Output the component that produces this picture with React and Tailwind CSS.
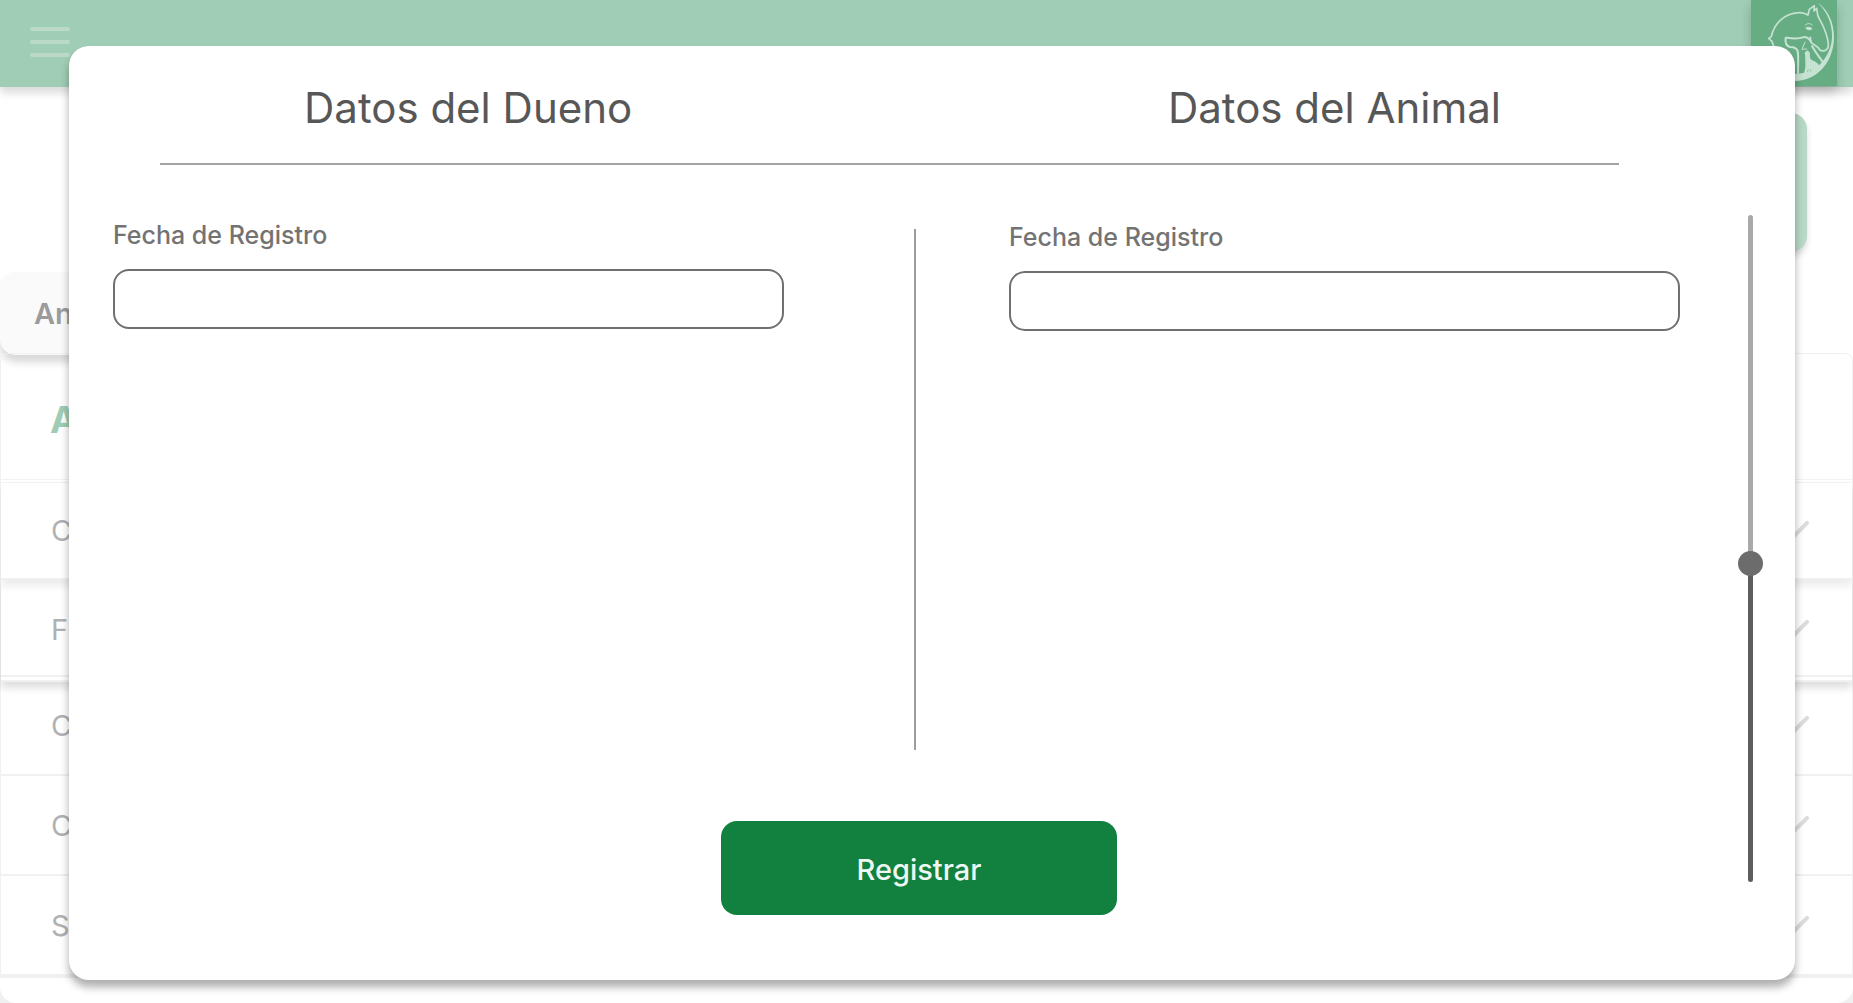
import { useState } from 'react';

const rows = [
  { id: 'r1', text: 'C', className: 'h-[97px] border-b-2 shadow-[0_6px_8px_rgba(0,0,0,0.08)]' },
  { id: 'r2', text: 'F', className: 'h-[102px] border-b-7 border-double pt-1 shadow-[0_6px_8px_rgba(0,0,0,0.13)]' },
  { id: 'r3', text: 'C', className: 'h-[94px] border-b-2 pb-1' },
  { id: 'r4', text: 'C', className: 'h-[100px] border-b-2 pt-0.5' },
  { id: 'r5', text: 'S', className: 'h-[101px] border-b-3 pt-0.5' },
];

function Logo() {
  return (
    <svg viewBox="153 0 258 258" className="block size-[86px]" fill="none" stroke="#c6e2d2" strokeLinejoin="round" strokeLinecap="round" aria-hidden="true">
      <path d="M352 7C386 30 402 70 402 112C402 185 352 243 285 243C262 243 240 232 226 214C250 226 268 222 284 222L318 220C362 204 394 160 396 112C397 74 384 38 352 7Z" fill="#c6e2d2" stroke="none" />
      <path d="M222 142L216 124L206 115L214 110C222 72 252 40 296 38C308 37 316 40 324 45L328 28L343 17L342 33L350 25L353 45C356 56 368 72 375 92C381 108 387 128 384 142C380 154 366 156 358 148C352 138 340 134 333 127C330 122 333 116 331 112" strokeWidth="5" />
      <path d="M333 124C324 112 318 109 308 112C294 118 274 115 257 113C255 126 258 138 270 141C284 141 291 145 293 154C296 174 294 196 294 222" strokeWidth="6" />
      <path d="M336 138C346 156 358 172 370 188" strokeWidth="6" />
      <path d="M315 76C321 69 331 69 337 75" strokeWidth="3" />
      <path d="M316 83C322 78 333 79 337 86C331 93 321 92 316 83Z" fill="#c6e2d2" stroke="none" />
      <path d="M315 126L306 148L320 147" strokeWidth="3" />
      <path d="M314 158L322 151L329 157C331 168 328 174 334 179C346 184 356 190 362 204L340 226L300 234L296 222L312 218C320 200 314 180 316 168Z" fill="#c6e2d2" stroke="none" />
      <path d="M322 214L325 209M331 214L333 209" stroke="#67ad83" strokeWidth="2" />
    </svg>
  );
}

function Chevron() {
  return (
    <svg viewBox="0 0 34 20" className="h-5 w-[34px]" fill="none" stroke="#dcdcdc" strokeWidth="4" strokeLinecap="round" strokeLinejoin="round" aria-hidden="true">
      <path d="M2 2L17 17L32 2" />
    </svg>
  );
}

function Field({ id, label, className }) {
  return (
    <div className={className}>
      <label htmlFor={id} className="block text-[25px] leading-8 font-medium text-[#737373]">
        {label}
      </label>
      <input id={id} type="text" className="mt-[18px] block h-[60px] w-full rounded-2xl border-2 border-[#707070] bg-white px-4 text-[25px] text-[#555] outline-none" />
    </div>
  );
}

function Background() {
  return (
    <div className="flex min-h-screen flex-col bg-[#f0f0f0]">
      <div className="flex flex-1 flex-col rounded-b-2xl bg-white">
        <header className="flex h-[87px] items-start justify-between bg-[#a0cdb5] pr-4 pl-[30px] shadow-[0_6px_8px_rgba(0,0,0,0.14)]">
          <button type="button" aria-label="Menu" className="mt-[27px] flex w-10 flex-col gap-[9px]">
            <span className="h-1 w-full rounded-full bg-[#bad9c9]" />
            <span className="h-1 w-full rounded-full bg-[#bad9c9]" />
            <span className="h-1 w-full rounded-full bg-[#bad9c9]" />
          </button>
          <div className="bg-[#67ad83] shadow-[0_6px_10px_rgba(0,0,0,0.2)]">
            <Logo />
          </div>
        </header>
        <div className="mt-[26px] flex justify-end pr-[46px]">
          <div className="h-[139px] w-60 rounded-2xl bg-[#b8d9c7] shadow-[0_5px_6px_rgba(0,0,0,0.14)]" />
        </div>
        <div className="mt-5 flex h-[83px] w-60 items-center rounded-2xl bg-[#fafafa] pl-[34px] text-[29px] leading-10 font-semibold text-[#9b9b9b] shadow-[0_7px_8px_rgba(0,0,0,0.16)]">
          An
        </div>
        <section className="-mt-0.5 rounded-t-lg border border-[#f1f1f2]">
          <h2 className="flex h-[125px] items-center pt-1.5 pl-[49px] text-[37px] leading-12 font-bold text-[#9fccb4]">A</h2>
          <ul className="border-t-4 border-double border-[#f1f2f4]">
            {rows.map((row) => (
              <li key={row.id} className={`flex items-center justify-between border-[#f0f1f3] pr-[43px] pl-[50px] text-[29px] leading-10 text-[#b0b1b3] ${row.className}`}>
                <span>{row.text}</span>
                <Chevron />
              </li>
            ))}
          </ul>
        </section>
      </div>
    </div>
  );
}

export default function App() {
  const [position, setPosition] = useState(524);

  return (
    <div className="relative min-h-screen overflow-hidden font-['Inter',sans-serif]">
      <Background />
      <div role="dialog" aria-label="Registro" className="absolute top-[46px] right-[58px] bottom-[23px] left-[69px] flex flex-col rounded-[20px] bg-white pb-[65px] shadow-[0_7px_8px_rgba(0,0,0,0.32)]">
        <header className="mr-44 ml-[91px] flex h-[119px] justify-between border-b-2 border-[#a3a3a3] pt-9 pr-[118px] pl-36 text-[42px] leading-[52px] text-[#575757]">
          <h1>Datos del Dueno</h1>
          <h1>Datos del Animal</h1>
        </header>
        <form className="mt-[50px] flex flex-1 pr-[42px] pl-11" onSubmit={(e) => e.preventDefault()}>
          <div className="flex flex-1 flex-col">
            <div className="flex flex-1">
              <Field id="fecha-dueno" label="Fecha de Registro" className="flex-1 pt-1" />
              <div className="mt-3.5 mr-[93px] ml-[130px] w-0.5 bg-[#9d9d9d]" />
              <Field id="fecha-animal" label="Fecha de Registro" className="flex-1 pt-1.5" />
            </div>
            <div className="mt-[71px] flex justify-center pl-[45px]">
              <button type="submit" className="h-[94px] w-[396px] rounded-2xl bg-[#12803f] pt-1 text-[29px] leading-10 font-medium text-[#eef8f2]">
                Registrar
              </button>
            </div>
          </div>
          <input
            type="range"
            aria-label="Desplazamiento"
            min="0"
            max="1000"
            value={position}
            onChange={(e) => setPosition(Number(e.target.value))}
            className="mb-[33px] ml-[68px] w-[5px] appearance-none rounded-full bg-[linear-gradient(to_bottom,#a9a9a9_52%,#5d5d5d_52%)] outline-none [writing-mode:vertical-lr] [&::-webkit-slider-thumb]:size-[25px] [&::-webkit-slider-thumb]:appearance-none [&::-webkit-slider-thumb]:rounded-full [&::-webkit-slider-thumb]:bg-[#6c6c6c]"
          />
        </form>
      </div>
    </div>
  );
}
